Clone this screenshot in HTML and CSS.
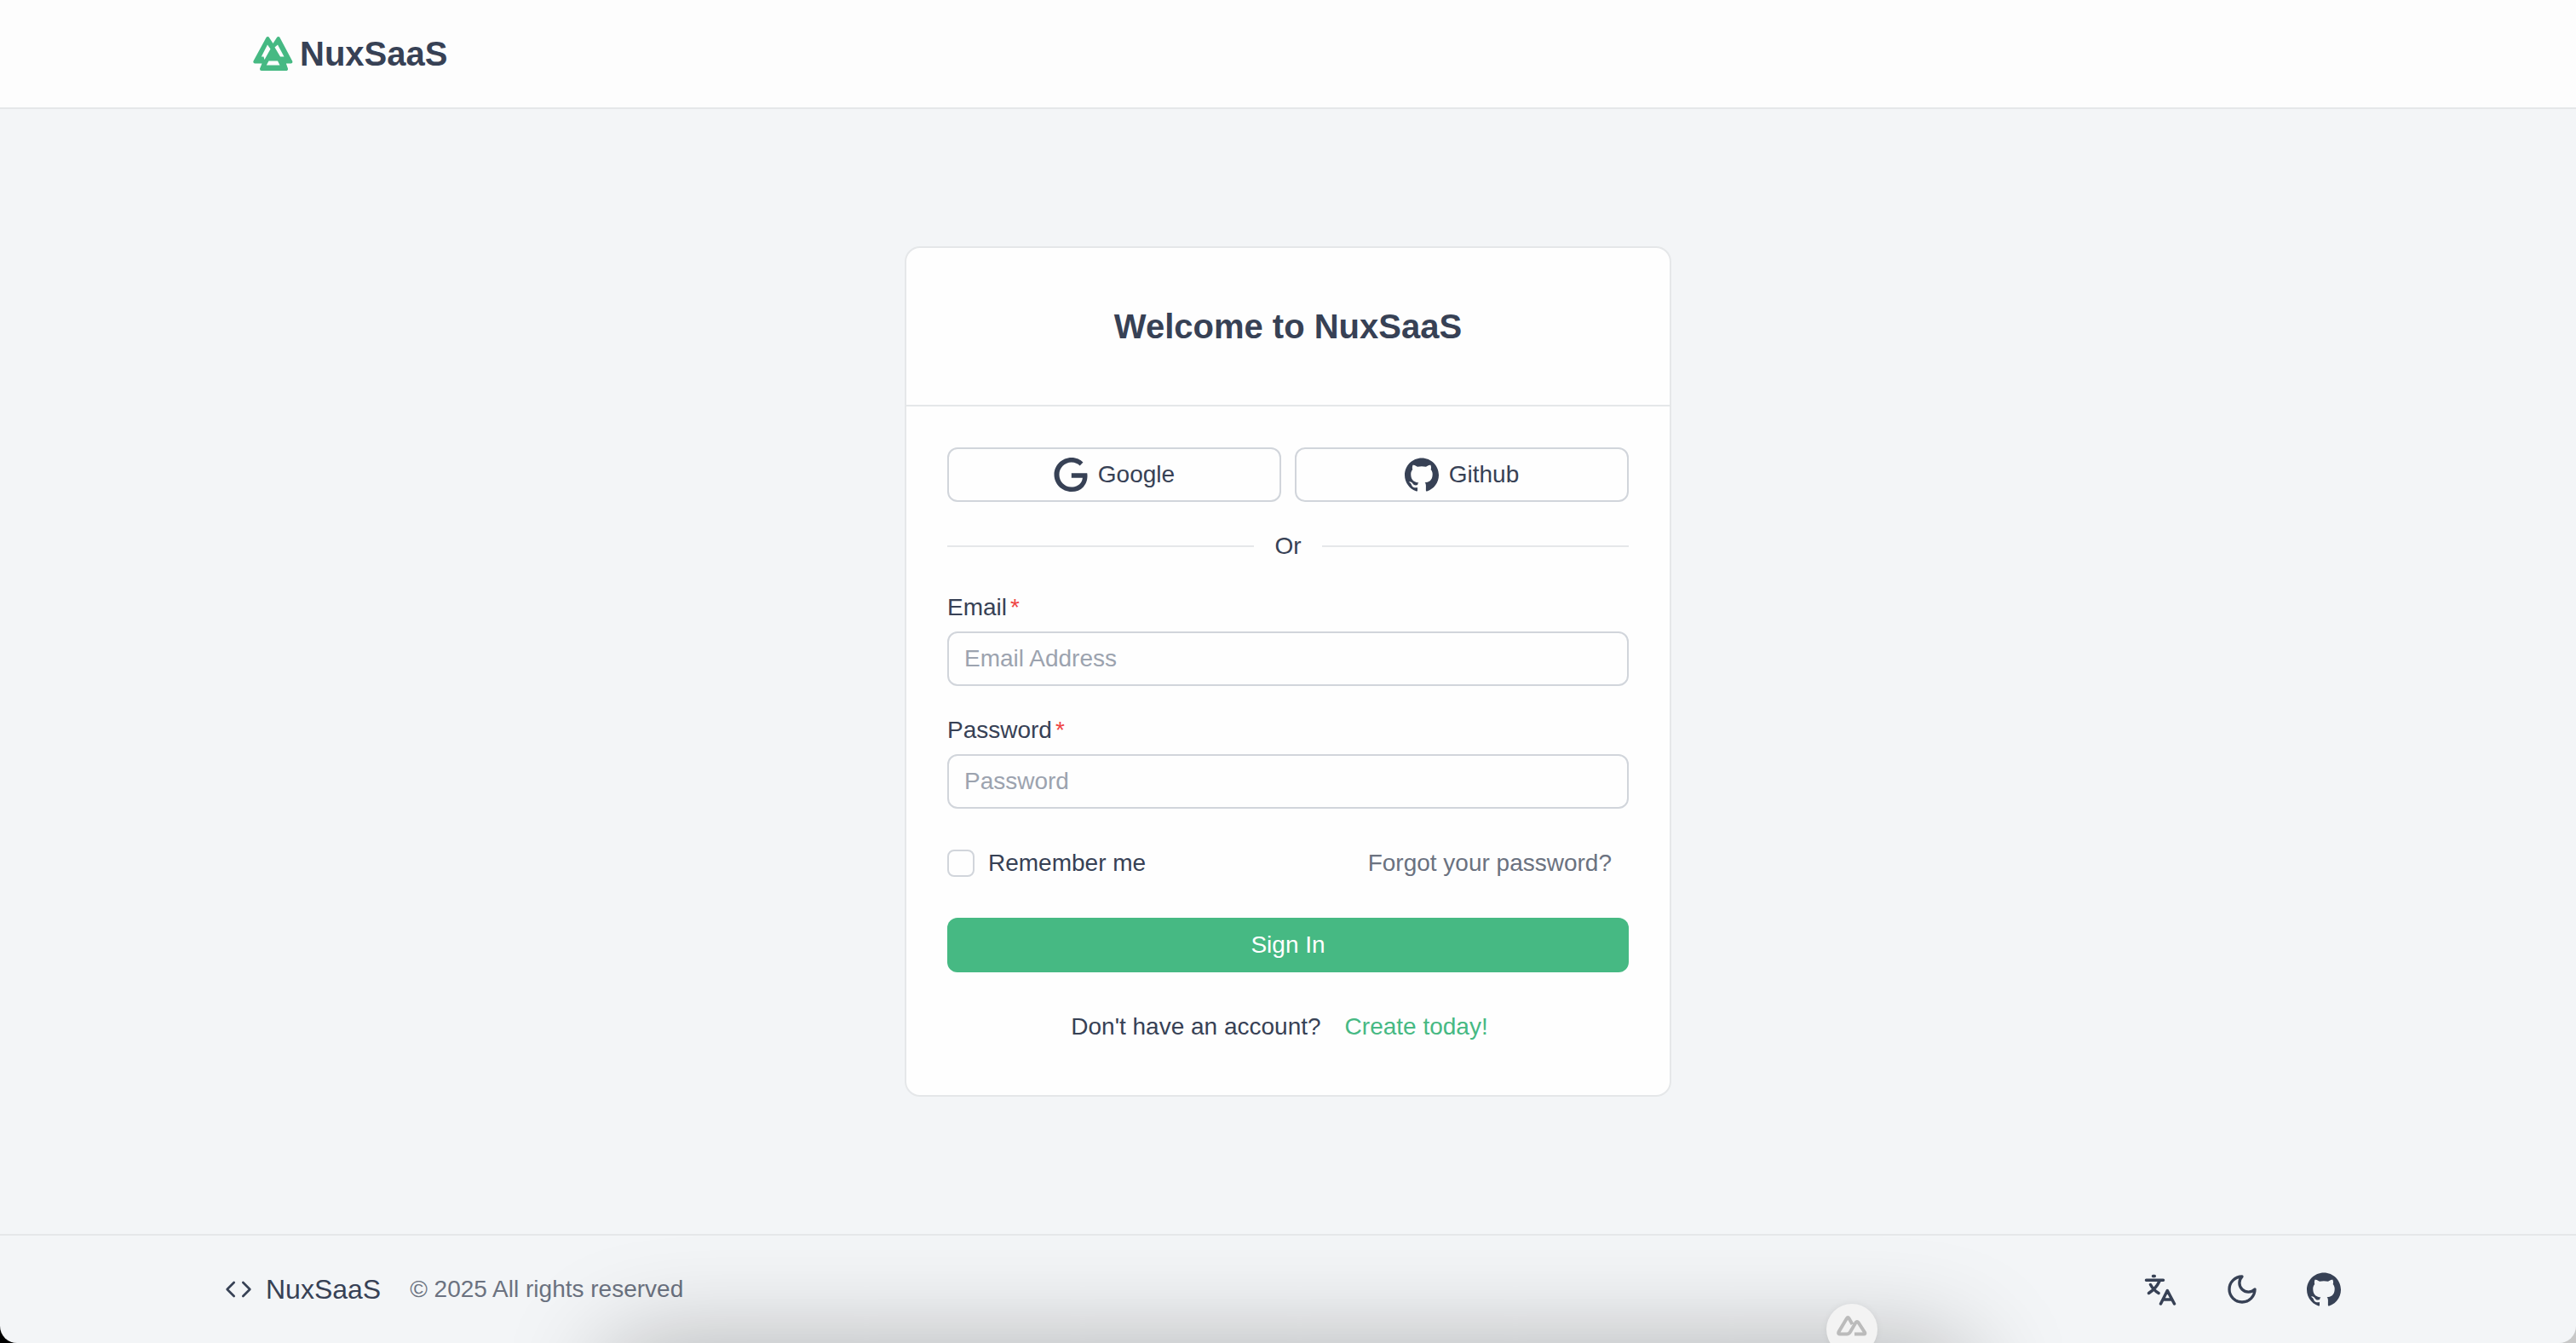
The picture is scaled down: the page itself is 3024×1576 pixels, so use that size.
FILE: index.html
```html
<!DOCTYPE html>
<html lang="en">
<head>
<meta charset="utf-8">
<title>Sign in - NuxSaaS</title>
<link rel="stylesheet" href="styles.css">
</head>
<body>
<svg class="sprite" aria-hidden="true">
  <symbol id="github" viewBox="0 0 24 24"><path fill="currentColor" d="M12 .297c-6.63 0-12 5.373-12 12 0 5.303 3.438 9.8 8.205 11.385.6.113.82-.258.82-.577 0-.285-.01-1.04-.015-2.04-3.338.724-4.042-1.61-4.042-1.61C4.422 18.07 3.633 17.7 3.633 17.7c-1.087-.744.084-.729.084-.729 1.205.084 1.838 1.236 1.838 1.236 1.07 1.835 2.809 1.305 3.495.998.108-.776.417-1.305.76-1.605-2.665-.3-5.466-1.332-5.466-5.93 0-1.31.465-2.38 1.235-3.22-.135-.303-.54-1.523.105-3.176 0 0 1.005-.322 3.3 1.23.96-.267 1.98-.399 3-.405 1.02.006 2.04.138 3 .405 2.28-1.552 3.285-1.23 3.285-1.23.645 1.653.24 2.873.12 3.176.765.84 1.23 1.91 1.23 3.22 0 4.61-2.805 5.625-5.475 5.92.42.36.81 1.096.81 2.22 0 1.606-.015 2.896-.015 3.286 0 .315.21.69.825.57C20.565 22.092 24 17.592 24 12.297c0-6.627-5.373-12-12-12"/></symbol>
</svg>
<div class="page">
  <header class="header">
    <div class="container header-inner">
      <a class="logo" href="#">
        <svg class="logo-mark" viewBox="0 0 48 48" aria-hidden="true">
          <path class="logo-shape" d="M18.300 6 24.500 15.500 30.700 6 45.300 33.500H37L40 42H11L14.500 33.500H3.300Z"/>
          <path class="logo-hole" d="M18 13.500 21.500 18.500 14.500 31 13.500 27.500H10.800ZM30 13.500 37.500 27.500H33L26.500 16.500ZM19.500 32.500H30L32.500 37.500H16.800Z"/>
        </svg>
        <span>NuxSaaS</span>
      </a>
    </div>
  </header>

  <main class="main">
    <section class="card">
      <div class="card-header"><h1 class="title">Welcome to NuxSaaS</h1></div>
      <form class="card-body">
        <div class="providers">
          <button class="btn btn-outline" type="button">
            <svg class="icon" viewBox="0 0 24 24" aria-hidden="true"><path fill="currentColor" d="M12.480 10.920v3.280h7.840c-.24 1.840-.853 3.187-1.787 4.133-1.147 1.147-2.933 2.400-6.053 2.400-4.827 0-8.600-3.893-8.600-8.720s3.773-8.720 8.600-8.720c2.600 0 4.507 1.027 5.907 2.347l2.307-2.307C18.747 1.440 16.133 0 12.480 0 5.867 0 .307 5.387.307 12s5.560 12 12.173 12c3.573 0 6.267-1.173 8.373-3.360 2.160-2.160 2.840-5.213 2.840-7.667 0-.76-.053-1.467-.173-2.053H12.480z"/></svg>
            Google
          </button>
          <button class="btn btn-outline" type="button">
            <svg class="icon" aria-hidden="true"><use href="#github"/></svg>
            Github
          </button>
        </div>
        <div class="separator">Or</div>
        <div class="field">
          <label class="label" for="email">Email</label>
          <input class="input" id="email" type="email" placeholder="Email Address" required>
        </div>
        <div class="field">
          <label class="label" for="password">Password</label>
          <input class="input" id="password" type="password" placeholder="Password" required>
        </div>
        <div class="options">
          <label class="remember" for="remember"><input class="checkbox" id="remember" type="checkbox">Remember me</label>
          <a class="link link-muted" href="#">Forgot your password?</a>
        </div>
        <button class="btn btn-primary" type="submit">Sign In</button>
        <p class="signup">Don't have an account? <a class="link link-primary" href="#">Create today!</a></p>
      </form>
    </section>
  </main>

  <footer class="footer">
    <div class="container footer-inner">
      <div class="footer-brand">
        <a class="brand" href="#">
          <svg class="icon-small" viewBox="0 0 24 24" aria-hidden="true"><path class="line" d="m16 18 6-6-6-6M8 6l-6 6 6 6"/></svg>
          NuxSaaS
        </a>
        <span class="copyright">© 2025 All rights reserved</span>
      </div>
      <nav class="footer-actions">
        <button class="icon-btn" type="button" aria-label="Language">
          <svg class="icon" viewBox="0 0 40 40" aria-hidden="true"><path class="line line-bold" d="M3.500 9.200H23.500M11.500 4.500H13.300M19 10.500Q15 19 6.500 24.500M8.500 14.500Q12 21 18 24.500M20.500 37 28.300 21.500 36.500 37M23.500 32H33.500"/></svg>
        </button>
        <button class="icon-btn" type="button" aria-label="Dark mode">
          <svg class="icon" viewBox="0 0 24 24" aria-hidden="true"><path class="line" d="M12 3a6 6 0 0 0 9 9 9 9 0 1 1-9-9Z"/></svg>
        </button>
        <a class="icon-btn" href="#" aria-label="GitHub">
          <svg class="icon" aria-hidden="true"><use href="#github"/></svg>
        </a>
      </nav>
    </div>
  </footer>

  <div class="dock-glow"></div>
  <button class="devtools" type="button" aria-label="Nuxt DevTools">
    <svg class="devtools-icon" viewBox="0 0 36 26" aria-hidden="true"><path d="M12 22.500H4Q1.500 22.500 2.500 20L12 4Q13.300 2 14.500 4L18.500 11M12 22.500Q14.500 22.500 16 20L22.500 9Q24 7 25.500 9L33 20.500Q34 22.500 32 22.500H21"/></svg>
  </button>
</div>
</body>
</html>
```
FILE: styles.css
```css
* { box-sizing: border-box; }

:root {
  --text: #374155;
  --muted: #6b7280;
  --primary: #46b983;
  --line: #e5e7e9;
  --control-line: #d1d5db;
}

body {
  margin: 0;
  background: linear-gradient(90deg, #000 50%, #c8c8c8 50%);
  color: var(--text);
  font-family: "Liberation Sans", Arial, sans-serif;
  font-size: 28px;
  line-height: 40px;
}

button, input { font: inherit; color: inherit; }
button { cursor: pointer; }
a { color: inherit; text-decoration: none; }
.sprite { display: none; }

.page {
  position: relative;
  display: flex;
  flex-direction: column;
  min-height: 100vh;
  overflow: hidden;
  background: #f3f5f7;
  border-radius: 0 0 20px 20px;
}

.container {
  width: 100%;
  max-width: 2560px;
  margin: 0 auto;
}

.header { background: #fdfdfd; border-bottom: 2px solid var(--line); }
.header-inner { display: flex; align-items: center; height: 126px; padding: 0 64px; }
.logo { display: flex; align-items: center; gap: 8px; font-size: 40px; font-weight: 700; line-height: 56px; }
.logo-mark { width: 48px; height: 48px; }
.logo-shape { fill: var(--primary); stroke: var(--primary); stroke-width: 4; stroke-linejoin: round; }
.logo-hole { fill: #fdfdfd; }

.main { flex: 1; display: flex; align-items: center; justify-content: center; }

.card {
  width: 100%;
  max-width: 900px;
  background: #fefefe;
  border: 2px solid var(--line);
  border-radius: 18px;
}
.card-header { padding: 64px 48px; border-bottom: 2px solid var(--line); }
.title { margin: 0; font-size: 40px; font-weight: 700; line-height: 56px; text-align: center; }
.card-body { display: flex; flex-direction: column; gap: 32px; padding: 48px; }

.providers { display: grid; grid-template-columns: 1fr 1fr; gap: 16px; }
.btn {
  display: flex;
  align-items: center;
  justify-content: center;
  gap: 12px;
  height: 64px;
  padding: 0 20px;
  border: 0;
  border-radius: 12px;
}
.btn-outline { background: #fefefe; border: 2px solid var(--control-line); }
.btn-primary { background: var(--primary); color: #fff; }
.icon { display: block; width: 40px; height: 40px; }
.icon-small { width: 32px; height: 32px; }
.line { fill: none; stroke: currentColor; stroke-width: 2; stroke-linecap: round; stroke-linejoin: round; }
.line-bold { stroke-width: 3.5; }

.separator { display: flex; align-items: center; gap: 24px; }
.separator::before, .separator::after { content: ""; flex: 1; height: 2px; background: var(--line); }

.field { display: flex; flex-direction: column; gap: 8px; }
.label::after { content: "*"; margin-left: 4px; color: #ef4444; }
.input {
  width: 100%;
  height: 64px;
  padding: 0 18px;
  background: #fefefe;
  border: 2px solid var(--control-line);
  border-radius: 12px;
}
.input::placeholder { color: #9ca3af; opacity: 1; }

.options { display: flex; align-items: center; justify-content: space-between; height: 64px; }
.remember { display: flex; align-items: center; gap: 16px; }
.checkbox {
  appearance: none;
  width: 32px;
  height: 32px;
  margin: 0;
  background: #fefefe;
  border: 2px solid var(--control-line);
  border-radius: 8px;
}
.checkbox:checked { background: var(--primary); }
.link { padding: 0 20px; }
.link-muted { color: var(--muted); }
.link-primary { color: var(--primary); }
.signup { display: flex; align-items: center; justify-content: center; gap: 8px; height: 64px; margin: 0; }

.footer { border-top: 2px solid var(--line); }
.footer-inner { display: flex; align-items: center; justify-content: space-between; height: 126px; padding: 0 32px; }
.footer-brand { display: flex; align-items: center; gap: 34px; }
.brand { display: flex; align-items: center; gap: 16px; font-size: 32px; }
.copyright { color: var(--muted); }
.footer-actions { display: flex; gap: 32px; }
.icon-btn {
  display: flex;
  align-items: center;
  justify-content: center;
  width: 64px;
  height: 64px;
  padding: 0;
  background: none;
  border: 0;
}

/* Soft glow behind the docked devtools toggle at the bottom edge */
.dock-glow {
  position: absolute;
  top: 100%;
  left: 50%;
  width: 1600px;
  height: 200px;
  margin-left: -800px;
  border-radius: 40px;
  box-shadow: 0 0 120px rgba(0, 0, 0, 0.28);
  pointer-events: none;
}
.devtools {
  position: absolute;
  bottom: -14px;
  left: calc(50% + 632px);
  width: 60px;
  height: 60px;
  padding: 12px 12px 20px;
  background: #f3f3f3;
  border: 0;
  border-radius: 50%;
  box-shadow: 0 0 8px rgba(0, 0, 0, 0.06);
}
.devtools-icon { display: block; width: 36px; height: 26px; fill: none; stroke: #bbb; stroke-width: 4; stroke-linecap: butt; }
```
